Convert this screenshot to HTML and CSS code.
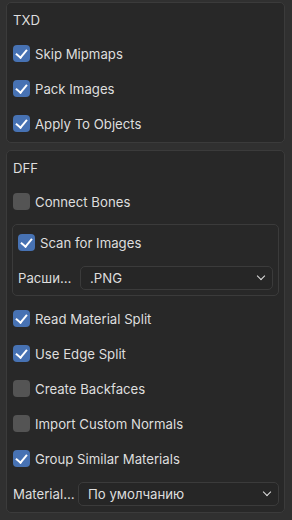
FILE: index.html
```html
<!DOCTYPE html>
<html lang="ru">
<head>
  <meta charset="utf-8" />
  <title>Import Options</title>
  <link rel="stylesheet" href="styles.css">
</head>
<body>
  <div class="panel">
    <div class="title">TXD</div>
    <label class="row"><span class="box on"></span>Skip Mipmaps</label>
    <label class="row"><span class="box on"></span>Pack Images</label>
    <label class="row"><span class="box on"></span>Apply To Objects</label>
  </div>

  <div class="panel">
    <div class="title">DFF</div>
    <label class="row"><span class="box"></span>Connect Bones</label>

    <div class="sub">
      <label class="row"><span class="box on"></span>Scan for Images</label>
      <div class="row field">
        <span class="field-label">Расши…</span>
        <div class="select">.PNG<span class="chev"></span></div>
      </div>
    </div>

    <label class="row"><span class="box on"></span>Read Material Split</label>
    <label class="row"><span class="box on"></span>Use Edge Split</label>
    <label class="row"><span class="box"></span>Create Backfaces</label>
    <label class="row"><span class="box"></span>Import Custom Normals</label>
    <label class="row"><span class="box on"></span>Group Similar Materials</label>
    <div class="row field">
      <span class="field-label wide">Material…</span>
      <div class="select">По умолчанию<span class="chev"></span></div>
    </div>
  </div>
</body>
</html>
```

FILE: styles.css
```css
*{box-sizing:border-box;}
body{
  margin:0;
  background:#303030;
  color:#dedede;
  font-family:Inter,"Noto Sans",sans-serif;
  font-size:13.2px;
}
.panel{
  margin:2px 7px 7px 6px;
  padding:0 5px 1px 6px;
  background:#282828;
  border:1px solid #3b3b3b;
  border-radius:5px;
}
.title{
  height:33px;
  display:flex;
  align-items:center;
}
.row{
  height:35px;
  display:flex;
  align-items:center;
  gap:5px;
}
.box{
  width:17px;
  height:17px;
  border-radius:4px;
  background:#545454;
  position:relative;
  flex:none;
}
.box.on{background:#4772b3;}
.box.on::after{
  content:"";
  position:absolute;
  left:5px;
  top:2px;
  width:5px;
  height:9px;
  border:solid #fff;
  border-width:0 2.6px 2.6px 0;
  transform:rotate(40deg);
}
.sub{
  margin:5px 0 5px -1px;
  padding:0 5px 0 5px;
  border:1px solid #3b3b3b;
  border-radius:5px;
}
.field{gap:0;}
.field-label{width:62px;flex:none;}
.field-label.wide{width:65px;}
.select{
  flex:1;
  height:24px;
  display:flex;
  align-items:center;
  padding:0 8px 0 9px;
  background:#262626;
  border:1px solid #3b3b3b;
  border-radius:5px;
}
.chev{
  margin-left:auto;
  width:6px;
  height:6px;
  border:solid #e0e0e0;
  border-width:0 1.5px 1.5px 0;
  transform:translateY(-2px) rotate(45deg);
}
```
